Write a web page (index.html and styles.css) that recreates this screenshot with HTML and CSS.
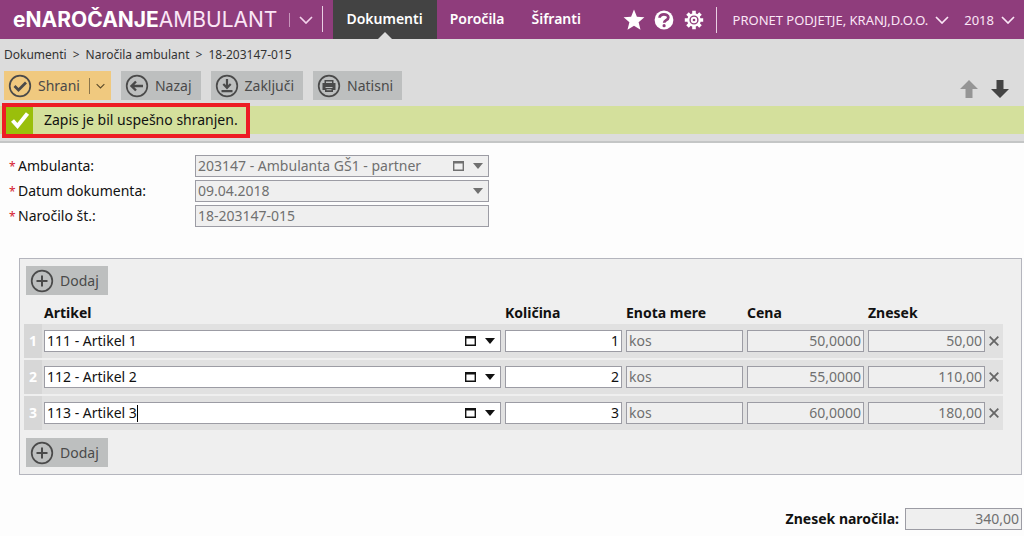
FILE: index.html
```html
<!DOCTYPE html>
<html lang="sl">
<head>
<meta charset="utf-8">
<meta name="viewport" content="width=device-width, initial-scale=1">
<title>eNaročanje Ambulant</title>
<link rel="stylesheet" href="styles.css">
</head>
<body>
<svg class="sprite" aria-hidden="true">
  <symbol id="chevron" viewBox="0 0 14 8"><path d="M1 1l6 6 6-6" fill="none" stroke="currentColor" stroke-width="1.7"/></symbol>
  <symbol id="plus" viewBox="0 0 24 24"><circle cx="12" cy="12" r="10.3" fill="none" stroke="currentColor" stroke-width="1.7"/><path d="M12 6.5v11M6.5 12h11" fill="none" stroke="currentColor" stroke-width="2"/></symbol>
  <symbol id="window" viewBox="0 0 11 10"><path d="M0 0h11v10H0zM1.4 2.4v6.2h8.2V2.4z" fill="currentColor" fill-rule="evenodd"/></symbol>
  <symbol id="triangle" viewBox="0 0 10 6"><path d="M0 0h10L5 6z" fill="currentColor"/></symbol>
  <symbol id="cross" viewBox="0 0 10 10"><path d="M.7.7l8.6 8.6M9.3.7L.7 9.3" fill="none" stroke="currentColor" stroke-width="1.8"/></symbol>
</svg>

<header class="topbar">
  <a class="brand" href="#"><b>eNAROČANJE</b>AMBULANT</a>
  <button class="brand-menu" type="button" aria-label="Izbira aplikacije"><svg class="chevron"><use href="#chevron"/></svg></button>
  <nav class="tabs">
    <a class="tab tab-active" href="#">Dokumenti</a>
    <a class="tab" href="#">Poročila</a>
    <a class="tab" href="#">Šifranti</a>
  </nav>
  <div class="tools">
    <button class="tool" type="button" aria-label="Priljubljeno"><svg viewBox="0 0 22 22"><path d="M11 .6l2.9 7.2 7.5.5-5.8 4.9 1.9 7.6-6.5-4.1-6.5 4.1 1.9-7.6L.6 8.3l7.5-.5z" fill="#fff"/></svg></button>
    <button class="tool" type="button" aria-label="Pomoč"><svg viewBox="0 0 22 22"><circle cx="11" cy="11" r="9.4" fill="#fff"/><path d="M6.600 8.800c-.2-4.600 8.800-4.400 8.700-.3 0 2.700-4.100 2.500-4.100 5.200" fill="none" stroke="#8f3d7c" stroke-width="2.800"/><circle cx="11.100" cy="16.700" r="1.600" fill="#8f3d7c"/></svg></button>
    <button class="tool" type="button" aria-label="Nastavitve"><svg viewBox="0 0 22 22"><g stroke="#fff" stroke-width="3.600"><path d="M11 1.800v18.400M1.800 11h18.400M4.500 4.500l13 13M17.500 4.500l-13 13"/></g><circle cx="11" cy="11" r="6.800" fill="#fff"/><circle cx="11" cy="11" r="3.900" fill="none" stroke="#8f3d7c" stroke-width="1.400"/><circle cx="11" cy="11" r="1.300" fill="#8f3d7c"/></svg></button>
  </div>
  <div class="account">
    <button class="picker" type="button">PRONET PODJETJE, KRANJ,D.O.O.<svg class="chevron"><use href="#chevron"/></svg></button>
    <button class="picker" type="button">2018<svg class="chevron"><use href="#chevron"/></svg></button>
  </div>
</header>

<section class="actions">
  <nav class="crumbs"><a href="#">Dokumenti</a><span>&gt;</span><a href="#">Naročila ambulant</a><span>&gt;</span><a href="#">18-203147-015</a></nav>
  <div class="toolbar">
    <div class="split">
      <button class="button button-save" type="button"><svg class="icon" viewBox="0 0 24 24"><circle cx="12" cy="12" r="10.3" fill="none" stroke="currentColor" stroke-width="1.7"/><path d="M6.5 12l4 4 7.5-7.5" fill="none" stroke="currentColor" stroke-width="2.8"/></svg>Shrani</button>
      <button class="split-more" type="button" aria-label="Več možnosti"><svg class="chevron chevron-small"><use href="#chevron"/></svg></button>
    </div>
    <button class="button" type="button"><svg class="icon" viewBox="0 0 24 24"><circle cx="12" cy="12" r="10.3" fill="none" stroke="currentColor" stroke-width="1.7"/><path d="M11 7.5L6.5 12l4.500 4.500M7 12h11" fill="none" stroke="currentColor" stroke-width="2.400"/></svg>Nazaj</button>
    <button class="button" type="button"><svg class="icon" viewBox="0 0 24 24"><circle cx="12" cy="12" r="10.3" fill="none" stroke="currentColor" stroke-width="1.7"/><path d="M12 5v8M8.300 10l3.700 3.800L15.700 10M6.500 17.200h11" fill="none" stroke="currentColor" stroke-width="2.200"/></svg>Zaključi</button>
    <button class="button" type="button"><svg class="icon" viewBox="0 0 24 24"><circle cx="12" cy="12" r="10.3" fill="none" stroke="currentColor" stroke-width="1.7"/><path d="M7.500 6h9v3h2v7h-2.500v2H8v-2H5.500V9h2zM9 7.500V9h6V7.500zM8.500 13v1h7v-1zM9.500 15.300v1h5v-1z" fill="currentColor" fill-rule="evenodd"/></svg>Natisni</button>
    <div class="pager">
      <button type="button" aria-label="Prejšnji" disabled><svg viewBox="0 0 18 18"><path d="M9 0l9 9h-5.500v9h-7V9H0z" fill="#959595"/></svg></button>
      <button type="button" aria-label="Naslednji"><svg viewBox="0 0 18 18"><path d="M9 18l9-9h-5.500V0h-7v9H0z" fill="#444"/></svg></button>
    </div>
  </div>
  <div class="message" role="status">
    <span class="message-mark"><svg viewBox="0 0 20 20"><path d="M2.500 10.500l5 5.500L17.500 3.500" fill="none" stroke="#fff" stroke-width="4"/></svg></span>
    <span class="message-text">Zapis je bil uspešno shranjen.</span>
    <span class="highlight"></span>
  </div>
</section>

<main>
  <form class="form">
    <label for="clinic"><i>*</i>Ambulanta:</label>
    <div class="field field-locked"><input id="clinic" value="203147 - Ambulanta GŠ1 - partner" readonly><button type="button" aria-label="Odpri"><svg class="window"><use href="#window"/></svg></button><button type="button" aria-label="Izberi"><svg class="triangle"><use href="#triangle"/></svg></button></div>
    <label for="date"><i>*</i>Datum dokumenta:</label>
    <div class="field field-locked"><input id="date" value="09.04.2018" readonly><button type="button" aria-label="Izberi datum"><svg class="triangle"><use href="#triangle"/></svg></button></div>
    <label for="number"><i>*</i>Naročilo št.:</label>
    <div class="field field-locked"><input id="number" value="18-203147-015" readonly></div>
  </form>

  <section class="panel">
    <button class="button" type="button"><svg class="icon"><use href="#plus"/></svg>Dodaj</button>
    <table class="items">
      <colgroup><col class="col-index"><col><col class="col-value"><col class="col-value"><col class="col-value"><col class="col-value"><col class="col-remove"></colgroup>
      <thead><tr><td></td><th>Artikel</th><th>Količina</th><th>Enota mere</th><th>Cena</th><th>Znesek</th><td></td></tr></thead>
      <tbody>
        <tr><td class="index">1</td>
          <td><div class="field"><input aria-label="Artikel" value="111 - Artikel 1"><button type="button" aria-label="Odpri"><svg class="window"><use href="#window"/></svg></button><button type="button" aria-label="Izberi"><svg class="triangle"><use href="#triangle"/></svg></button></div></td>
          <td><div class="field field-number"><input aria-label="Količina" value="1"></div></td>
          <td><div class="field field-locked"><input aria-label="Enota mere" value="kos" readonly></div></td>
          <td><div class="field field-locked field-number"><input aria-label="Cena" value="50,0000" readonly></div></td>
          <td><div class="field field-locked field-number"><input aria-label="Znesek" value="50,00" readonly></div></td>
          <td class="remove"><button type="button" aria-label="Odstrani"><svg><use href="#cross"/></svg></button></td></tr>
        <tr><td class="index">2</td>
          <td><div class="field"><input aria-label="Artikel" value="112 - Artikel 2"><button type="button" aria-label="Odpri"><svg class="window"><use href="#window"/></svg></button><button type="button" aria-label="Izberi"><svg class="triangle"><use href="#triangle"/></svg></button></div></td>
          <td><div class="field field-number"><input aria-label="Količina" value="2"></div></td>
          <td><div class="field field-locked"><input aria-label="Enota mere" value="kos" readonly></div></td>
          <td><div class="field field-locked field-number"><input aria-label="Cena" value="55,0000" readonly></div></td>
          <td><div class="field field-locked field-number"><input aria-label="Znesek" value="110,00" readonly></div></td>
          <td class="remove"><button type="button" aria-label="Odstrani"><svg><use href="#cross"/></svg></button></td></tr>
        <tr><td class="index">3</td>
          <td><div class="field field-editing"><input aria-label="Artikel" value="113 - Artikel 3"><span class="caret"></span><button type="button" aria-label="Odpri"><svg class="window"><use href="#window"/></svg></button><button type="button" aria-label="Izberi"><svg class="triangle"><use href="#triangle"/></svg></button></div></td>
          <td><div class="field field-number"><input aria-label="Količina" value="3"></div></td>
          <td><div class="field field-locked"><input aria-label="Enota mere" value="kos" readonly></div></td>
          <td><div class="field field-locked field-number"><input aria-label="Cena" value="60,0000" readonly></div></td>
          <td><div class="field field-locked field-number"><input aria-label="Znesek" value="180,00" readonly></div></td>
          <td class="remove"><button type="button" aria-label="Odstrani"><svg><use href="#cross"/></svg></button></td></tr>
      </tbody>
    </table>
    <button class="button" type="button"><svg class="icon"><use href="#plus"/></svg>Dodaj</button>
  </section>

  <div class="total">
    <label for="total">Znesek naročila:</label>
    <div class="field field-locked field-number"><input id="total" value="340,00" readonly></div>
  </div>
</main>
</body>
</html>
```
FILE: styles.css
```css
* { box-sizing: border-box; }
body {
  margin: 0;
  background: #fdfdfd;
  color: #111;
  font: 14px/20px "Trebuchet MS", "Noto Sans", sans-serif;
}
button { margin: 0; padding: 0; border: 0; background: none; color: inherit; font: inherit; }
a { color: inherit; text-decoration: none; }
svg { display: block; flex: none; }
.sprite { position: absolute; width: 0; height: 0; }
.chevron { width: 14px; height: 8px; }
.chevron-small { width: 9px; height: 6px; }

.topbar { display: flex; align-items: center; height: 39px; background: #8f3d7c; color: #fff; white-space: nowrap; }
.brand { padding-left: 13px; font: 21px/24px Inter, sans-serif; color: #fbe6f6; }
.brand b { color: #fff; font-weight: 700; }
.brand-menu { display: flex; align-items: center; height: 14px; margin-left: 12px; padding: 0 0 0 9px; border-left: 1px solid #c795bb; color: #f3d3ec; }
.tabs { display: flex; align-items: center; margin-left: 9px; padding-left: 11px; position: relative; }
.tabs::before { content: ""; position: absolute; left: 0; top: 6px; width: 1px; height: 26px; background: #e9cfe3; }
.tab { height: 39px; padding: 0 14px 0 13px; font-size: 14px; line-height: 38px; font-weight: 600; }
.tab-active { position: relative; background: #434343; }
.tab-active::after { content: ""; position: absolute; left: 50%; bottom: 0; margin-left: -7px; border: 7px solid transparent; border-top: 0; border-bottom-color: #dcdcdc; }
.tools { display: flex; gap: 8px; margin-left: auto; padding-right: 11px; }
.tool svg { width: 22px; height: 22px; }
.account { display: flex; align-items: center; gap: 15px; height: 26px; padding: 0 9px 0 16px; border-left: 1px solid #e9cfe3; font-size: 13px; color: #fbe6f6; }
.picker { display: flex; align-items: center; gap: 7px; }

.actions { background: #dcdcdc; border-bottom: 2px solid #c4c6c6; }
.crumbs { display: flex; gap: 6px; padding: 6px 4px; color: #333; font-size: 12px; }
.toolbar { display: flex; gap: 10px; padding: 0 15px 0 4px; }
.button { display: flex; align-items: center; gap: 6px; height: 29px; padding: 0 9px 0 4px; background: #bdbfbf; color: #4a4a4a; }
.icon { width: 24px; height: 24px; }
.split { display: flex; align-items: center; background: #f0c97f; }
.button-save { background: none; }
.split-more { display: flex; align-items: center; height: 16px; padding: 0 6px; border-left: 1px solid #8a744a; color: #5a4a2a; }
.pager { display: flex; align-items: center; gap: 13px; margin-left: auto; padding-top: 6px; }
.pager svg { width: 18px; height: 18px; }
.message { position: relative; display: flex; align-items: center; gap: 11px; height: 28px; margin: 6px 0 7px; padding-left: 6px; background: #d4e09c; }
.message-mark { display: flex; align-items: center; justify-content: center; width: 27px; height: 28px; background: #9abf0b; }
.message-mark svg { width: 20px; height: 20px; }
.highlight { position: absolute; left: 2px; top: -3px; width: 248px; height: 35px; border: 4px solid #ed1c24; }

.form { display: grid; grid-template-columns: 186px 294px; row-gap: 3px; padding: 12px 0 0 9px; align-items: center; }
.form i { display: inline-block; width: 9px; color: #d5202f; font-size: 12px; font-style: normal; }
.field { display: flex; align-items: center; height: 22px; padding: 0 5px 0 2px; border: 1px solid #9c9ca4; background: #fff; color: #111; }
.field input { flex: 1; min-width: 0; width: 100%; height: 20px; padding: 0; border: 0; outline: 0; background: none; color: inherit; font: inherit; }
.field-locked { background: #efefef; color: #707070; }
.field-number { padding-right: 2px; }
.field-number input { text-align: right; }
.field button { margin-left: 9px; }
.window { width: 11px; height: 10px; }
.triangle { width: 10px; height: 6px; }
.field-editing input { flex: none; width: auto; field-sizing: content; }
.field-editing .caret { width: 1px; height: 17px; margin-right: auto; background: #000; }

.panel { margin: 31px 2px 0 19px; padding: 7px 18px 7px 4px; border: 1px solid #b4b5bd; background: #efefef; }
.panel .button { margin-left: 2px; }
.items { width: 100%; table-layout: fixed; border-collapse: separate; border-spacing: 0 2px; margin: 7px 0 6px; }
.col-index { width: 18px; }
.col-value { width: 121px; }
.col-remove { width: 16px; }
.items th { height: 18px; padding: 0 2px; line-height: 18px; text-align: left; font-weight: 700; }
.items td { padding: 0 2px; }
.items tbody td { height: 34px; background: #e1e1e1; }
.items tbody .index { background: #d7d7d7; color: #fff; font-weight: 700; text-align: center; }
.items .remove { color: #666; }
.remove svg { width: 10px; height: 10px; }
.remove button { display: block; }

.total { display: flex; align-items: center; justify-content: flex-end; gap: 6px; padding: 33px 2px 6px; font-weight: 700; }
.total .field { width: 117px; font-weight: 400; }
```
